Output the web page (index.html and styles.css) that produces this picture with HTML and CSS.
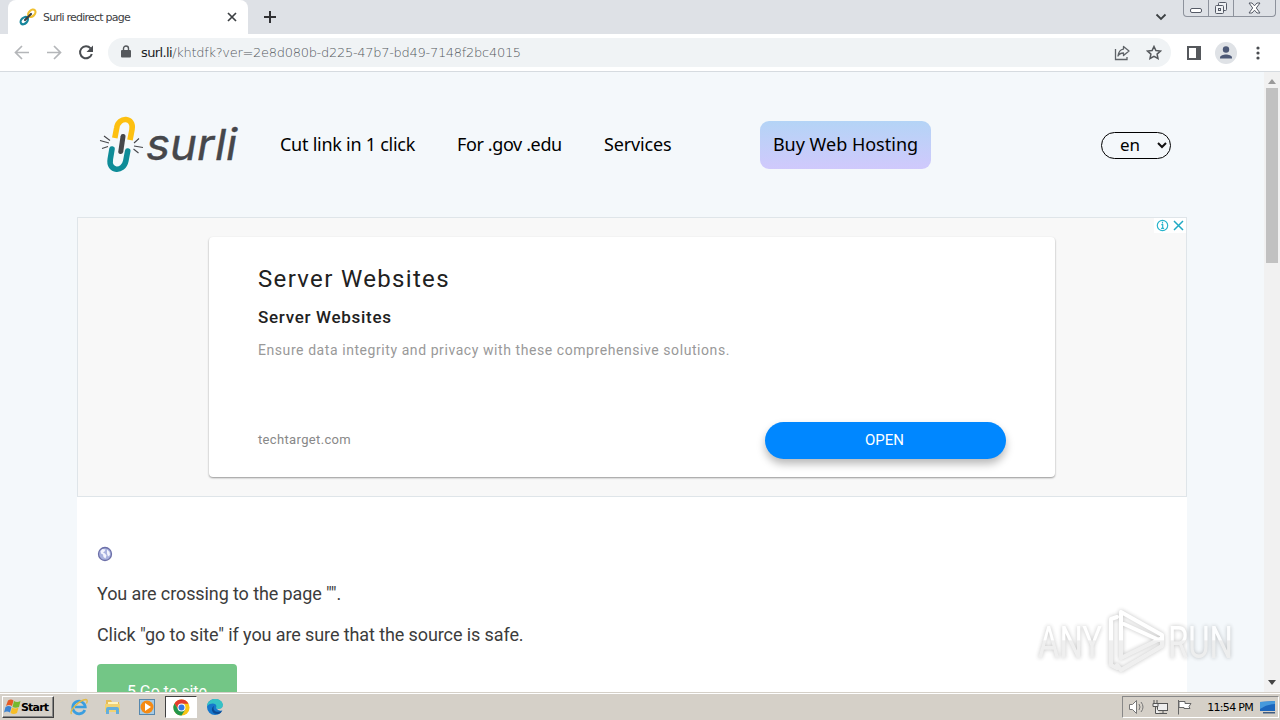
FILE: index.html
```html
<!DOCTYPE html>
<html lang="en">
<head>
  <meta charset="utf-8">
  <title>Surli redirect page</title>
  <link rel="stylesheet" href="styles.css">
</head>
<body>
  <div class="tabstrip">
    <div class="tab">
      <svg class="favicon" width="18" height="18" viewBox="0 0 18 18" fill="none" stroke-width="2.2" stroke-linecap="round">
        <ellipse cx="12.8" cy="5.3" rx="4.3" ry="2.9" transform="rotate(-45 12.8 5.3)" stroke="#f0c030"/>
        <ellipse cx="5.3" cy="12.6" rx="4.3" ry="2.9" transform="rotate(-45 5.3 12.6)" stroke="#16869c"/>
        <path d="M6 12l6-6" stroke="#3c4043"/>
      </svg>
      <span class="tab-title">Surli redirect page</span>
      <svg class="tab-close" width="10" height="10" viewBox="0 0 10 10" stroke="#3c4043" stroke-width="1.7"><path d="M1 1l8 8M9 1L1 9"/></svg>
    </div>
    <svg class="new-tab" width="12" height="12" viewBox="0 0 12 12" stroke="#303134" stroke-width="2"><path d="M6 0v12M0 6h12"/></svg>
    <svg class="tab-search" width="12" height="8" viewBox="0 0 12 8" fill="none" stroke="#3c4043" stroke-width="1.8"><path d="M1.5 1.5L6 6l4.5-4.5"/></svg>
    <div class="window-buttons">
      <div class="wbtn"><svg class="minimize" width="13" height="7" viewBox="0 0 13 7"><rect x=".5" y="1.5" width="11" height="4" rx="1.5" fill="#fff" stroke="#555a66"/></svg></div>
      <div class="wbtn"><svg width="14" height="14" viewBox="0 0 14 14" fill="#eef0f3" stroke="#555a66"><rect x="4.5" y="1.5" width="8" height="8" rx="1"/><rect x="1.5" y="4.5" width="8" height="8" rx="1"/><rect x="4.5" y="7.5" width="2" height="2"/></svg></div>
      <div class="wbtn wide"><svg width="13" height="12" viewBox="0 0 13 12"><path d="M1 1h3l2.500 2.800L9 1h3L8.300 6 12 11H9L6.500 8.200 4 11H1l3.700-5z" fill="#fff" stroke="#555a66"/></svg></div>
    </div>
  </div>

  <div class="toolbar">
    <svg class="nav-icon" width="16" height="16" viewBox="0 0 16 16" fill="none" stroke="#b4b6b9" stroke-width="1.7"><path d="M15 7.500H2M8 1L1.500 7.500 8 14"/></svg>
    <svg class="nav-icon" width="16" height="16" viewBox="0 0 16 16" fill="none" stroke="#b4b6b9" stroke-width="1.7"><path d="M1 7.500h13M8 1l6.500 6.500L8 14"/></svg>
    <svg class="nav-icon" width="16" height="16" viewBox="0 0 16 16"><path d="M12.600 3.300A6 6 0 1 0 13.800 9" fill="none" stroke="#4a4d51" stroke-width="2"/><path d="M15 .5V7H8.500z" fill="#4a4d51"/></svg>
    <div class="omnibox">
      <svg class="lock" width="10" height="13" viewBox="0 0 10 13"><path d="M2.500 6V3.500a2.500 2.500 0 0 1 5 0V6" fill="none" stroke="#55585c" stroke-width="1.4"/><rect y="5" width="10" height="7.500" rx="1" fill="#55585c"/></svg>
      <span class="url"><b>surl.li</b>/khtdfk?ver=2e8d080b-d225-47b7-bd49-7148f2bc4015</span>
      <svg class="share" width="16" height="16" viewBox="0 0 16 16" fill="none" stroke="#5f6368" stroke-width="1.3"><path d="M1.500 4v10.500H13V12"/><path d="M9.500 1.500L15 6l-5.500 4.500V8C6.500 8 5 9 4 11c.5-4 2.500-6.500 5.500-6.900z" stroke-linejoin="round"/></svg>
      <svg width="16" height="16" viewBox="0 0 16 16" fill="none" stroke="#55585c" stroke-width="1.5"><path d="M8 1.500l1.900 4.100 4.500.5-3.300 3 .9 4.400L8 11.300l-4 2.200.9-4.400-3.300-3 4.500-.5z"/></svg>
    </div>
    <svg class="side-panel" width="14" height="14" viewBox="0 0 14 14"><rect x="1" y="1" width="12" height="12" fill="#fff" stroke="#55585c" stroke-width="2"/><path d="M9 1h4v12H9z" fill="#55585c"/></svg>
    <svg class="avatar" width="22" height="22" viewBox="0 0 22 22"><circle cx="11" cy="11" r="11" fill="#dfe2e6"/><circle cx="11" cy="7.500" r="3.200" fill="#4c5876"/><path d="M5 16.500v-1c0-2 3.500-3 6-3s6 1 6 3v1z" fill="#4c5876"/></svg>
    <svg class="menu-dots" width="4" height="14" viewBox="0 0 4 14" fill="#4a4d51"><circle cx="2" cy="2" r="1.600"/><circle cx="2" cy="7" r="1.600"/><circle cx="2" cy="12" r="1.600"/></svg>
  </div>

  <div class="viewport">
    <div class="page">
      <header class="site-header">
        <svg class="logo" width="142" height="64" viewBox="98 113 142 64" fill="none">
          <path d="M114.800 138l1.900-10C118.500 116 134.500 117 132 129.500l-2 10.500" stroke="#fdc010" stroke-width="5.600"/>
          <path d="M112 149l-1.700 10C108 172 123.500 172.500 125.800 161l1.900-10" stroke="#0e8c98" stroke-width="5.600" stroke-linecap="round"/>
          <path d="M123 136.500l-2.200 15" stroke="#46474b" stroke-width="5" stroke-linecap="round"/>
          <path d="M104 136l6 4.500M100 140.500l9 2.500M102 148.500l6-2M139 138.500l-5 4.500M134 146l9 1.500M133.500 149l5 4" stroke="#46474b" stroke-width="1.100"/>
          <text x="146" y="160" textLength="91" lengthAdjust="spacingAndGlyphs" class="logo-text">surli</text>
        </svg>
        <nav class="site-nav">
          <a class="nav-cut">Cut link in 1 click</a>
          <a class="nav-gov">For .gov .edu</a>
          <a class="nav-services">Services</a>
        </nav>
        <a class="hosting-btn"><span>Buy Web Hosting</span></a>
        <div class="lang">
          <span>en</span>
          <svg width="10" height="7" viewBox="0 0 10 7" fill="none" stroke="#111" stroke-width="2"><path d="M1 1l4 4 4-4"/></svg>
        </div>
      </header>

      <main class="content">
        <section class="ad">
          <div class="ad-card">
            <h2 class="ad-title">Server Websites</h2>
            <h3 class="ad-subtitle">Server Websites</h3>
            <p class="ad-text">Ensure data integrity and privacy with these comprehensive solutions.</p>
            <div class="ad-footer">
              <span class="ad-domain">techtarget.com</span>
              <a class="ad-open">OPEN</a>
            </div>
          </div>
          <div class="ad-choices">
            <svg width="13" height="13" viewBox="0 0 13 13"><circle cx="6.500" cy="6.500" r="5.200" fill="none" stroke="#28b4cc" stroke-width="1.200"/><path d="M6.500 2.800v1.600M5.300 5.700h1.400v3.600M5.100 9.400h3" stroke="#28b4cc" stroke-width="1.200" fill="none"/></svg>
            <svg width="11" height="11" viewBox="0 0 11 11" stroke="#20a9c4" stroke-width="1.500"><path d="M1 1l9 9M10 1l-9 9"/></svg>
          </div>
        </section>

        <section class="redirect">
          <svg class="globe" width="16" height="16" viewBox="0 0 16 16"><circle cx="8" cy="8" r="6.500" fill="#a9b2de" stroke="#6c6fa8" stroke-width="1.300"/><path d="M3.500 5l2-2 3 .5-1 2-1.500 1 2 1 1.500 2-1 3-2-1.500-.5-2.500-2-1zM10 3.500l2.500 2.500.5 3-2 1.500-1-3z" fill="#f3f4fd"/></svg>
          <p class="line-page">You are crossing to the page "".</p>
          <p class="line-click">Click "go to site" if you are sure that the source is safe.</p>
          <a class="go-btn">5 Go to site</a>
        </section>
      </main>
    </div>

    <div class="scrollbar">
      <svg width="8" height="5" viewBox="0 0 8 5"><path d="M0 5l4-5 4 5z" fill="#9a9a9a"/></svg>
      <div class="thumb"></div>
      <svg class="scroll-down" width="8" height="5" viewBox="0 0 8 5"><path d="M0 0h8L4 5z" fill="#444"/></svg>
    </div>

    <div class="watermark">
      <svg width="206" height="70" viewBox="0 0 206 70">
        <defs>
          <linearGradient id="fade" gradientUnits="userSpaceOnUse" x1="0" y1="0" x2="0" y2="70">
            <stop offset=".48" stop-color="#fff"/>
            <stop offset=".5" stop-color="#ececec"/>
          </linearGradient>
        </defs>
        <text x="4" y="52" textLength="64" lengthAdjust="spacingAndGlyphs">ANY</text>
        <g fill="none" stroke="url(#fade)" stroke-linejoin="round" stroke-linecap="round" stroke-width="4">
          <path d="M83 11l-6 2v46l6 3"/>
          <path d="M87 6v46l41-20v-3z"/>
          <path d="M90 18l35 16"/>
          <path d="M83 59l4 5 41-24v-7"/>
        </g>
        <text x="134" y="52" textLength="65" lengthAdjust="spacingAndGlyphs">RUN</text>
      </svg>
    </div>
  </div>

  <div class="taskbar">
    <div class="start">
      <svg width="17" height="16" viewBox="0 0 17 16"><path d="M4 1.500q3-2 5.500 0L8 7Q5 5 2 7z" fill="#e65a24"/><path d="M10 2q3 2 6.500 0L15 8q-3.500 1.500-6.500 0z" fill="#76b82f"/><path d="M1.500 8q3-2 6 0L6 13.500q-3-2-6 0z" fill="#3c83d2"/><path d="M8 8.500q3 2 6.500 0L13 14q-3.500 2-6.500 0z" fill="#f6bd26"/></svg>
      <span>Start</span>
    </div>
    <div class="task"><svg width="18" height="18" viewBox="0 0 18 18" fill="none"><path d="M14.800 12A6.300 6.300 0 1 1 15.300 9H5" stroke="#3a9ee0" stroke-width="2.700"/><path d="M1.500 16C-1 13 9 2 16 1.500c1.500 0 1.500 2 .5 4" stroke="#e2ba45" stroke-width="1.300"/></svg></div>
    <div class="task"><svg width="18" height="18" viewBox="0 0 18 18"><path d="M2 2h5l1 2h7v9H2z" fill="#e6bd58"/><path d="M4 4h10v7H4z" fill="#fff4bd"/><path d="M1 6h15v8H1z" fill="#f1d272"/><path d="M2 16v-5q0-2 2-2h9q2 0 2 2v5h-3v-4H5v4z" fill="#64aedb"/></svg></div>
    <div class="task"><svg width="18" height="18" viewBox="0 0 18 18"><rect x="1.500" y="1.500" width="15" height="15" fill="#a6cbe5" stroke="#5687ad"/><circle cx="9" cy="9" r="6.500" fill="#f58a13"/><path d="M7 5l6 4-6 4z" fill="#fff"/></svg></div>
    <div class="task active"><svg width="17" height="17" viewBox="0 0 18 18"><circle cx="9" cy="9" r="8.500" fill="#f9c515"/><path d="M1.600 4.700A8.500 8.500 0 0 1 16.400 5H9L6 12z" fill="#e33b2e"/><path d="M1.600 4.700A8.500 8.500 0 0 0 9 17.500l4-6.500H5.500z" fill="#22964c"/><circle cx="9" cy="9" r="4.200" fill="#fff"/><circle cx="9" cy="9" r="3.200" fill="#3478e5"/></svg></div>
    <div class="task"><svg width="18" height="18" viewBox="0 0 18 18"><circle cx="9" cy="9" r="8" fill="#1677cc"/><path d="M1 8C2-1 16-1 17 7c0 4-5 5-7 3 2-5-5-6-9-2z" fill="#35c2c5"/><path d="M8 8c-2 5 3 7 8 5l-1 1.500c-3 3-8 1.500-9-2-.5-2 .5-4 2-4.500z" fill="#0c4a94"/><path d="M10 10c2 2 7 1 7-3v5q-4 2-7-2z" fill="#d5d0c8"/></svg></div>
    <div class="tray">
      <svg width="18" height="16" viewBox="0 0 18 16" fill="none" stroke="#777"><path d="M1.500 5.500h3l4-4v13l-4-4h-3z" fill="#fff"/><path d="M11 5q2 3 0 6M13 3q4 5 0 10"/></svg>
      <svg width="18" height="16" viewBox="0 0 18 16" fill="#eee" stroke="#555"><rect x="5.500" y="4.500" width="10" height="7"/><path d="M8 14.500h7M11 12v2M2 1v3M5 1v3M1 4.500h5v3H1zM3.500 8v6.500H8"/></svg>
      <svg width="18" height="16" viewBox="0 0 18 16" fill="#fff" stroke="#666"><path d="M2.500 1v14.500M3 2.500h6v2h6l-2 3 1 2H8v-1H3z"/></svg>
      <span class="clock">11:54 PM</span>
      <svg width="17" height="15" viewBox="0 0 17 15"><path d="M1 2l15-1v10H1z" fill="#1c66bd"/><path d="M1 2l15-1v3Q8 4 1 9z" fill="#4699dc"/><path d="M4 12h12v1.500H4z" fill="#405c80"/></svg>
    </div>
  </div>
</body>
</html>
```

FILE: styles.css
```css
* {
  box-sizing: border-box;
}

body {
  margin: 0;
  width: 1280px;
  height: 720px;
  overflow: hidden;
  display: flex;
  flex-direction: column;
  font-family: "Noto Sans", sans-serif;
  background: #fff;
}

svg {
  flex-shrink: 0;
}

/* browser chrome */
.tabstrip {
  height: 34px;
  display: flex;
  align-items: center;
  background: #dee1e6;
  padding-left: 8px;
}

.tab {
  width: 240px;
  height: 34px;
  display: flex;
  align-items: center;
  padding: 0 11px;
  background: #fff;
  border-radius: 8px 8px 0 0;
}

.tab-title {
  margin-left: 6px;
  font: 11px "DejaVu Sans", sans-serif;
  letter-spacing: -0.77px;
  color: #3c4043;
}

.tab-close {
  margin-left: auto;
}

.new-tab {
  margin-left: 16px;
}

.tab-search {
  margin-left: auto;
}

.window-buttons {
  display: flex;
  align-self: flex-start;
  height: 17px;
  margin: 0 4px 0 16px;
  border: 1px solid #8d929c;
  border-top: 0;
  border-radius: 0 0 4px 4px;
}

.wbtn {
  width: 25px;
  display: flex;
  align-items: center;
  justify-content: center;
  border-right: 1px solid #8d929c;
}

.minimize {
  margin-top: 4px;
}

.wbtn.wide {
  width: 41px;
  border-right: 0;
}

.toolbar {
  height: 38px;
  display: flex;
  align-items: center;
  padding: 0 20px 0 14px;
  background: #fff;
  border-bottom: 1px solid #d6dbe0;
}

.nav-icon {
  margin-right: 16px;
}

.omnibox {
  width: 1063px;
  height: 29px;
  margin-left: -2px;
  padding: 0 9px 0 13px;
  display: flex;
  align-items: center;
  border-radius: 15px;
  background: #f0f3f5;
}

.lock {
  margin-bottom: 2px;
}

.url {
  margin-left: 10px;
  font: 200 13px "DejaVu Sans", sans-serif;
  letter-spacing: -0.29px;
  color: #55595e;
}

.url b {
  font-weight: 400;
  letter-spacing: -0.6px;
  color: #202124;
}

.share {
  margin: 0 16px 0 auto;
}

.side-panel {
  margin-left: 16px;
}

.avatar {
  margin-left: 14px;
}

.menu-dots {
  margin-left: auto;
}

/* site */
.viewport {
  position: relative;
  height: 620px;
  display: flex;
  overflow: hidden;
}

.page {
  width: 1264px;
  background: #f4f8fb;
}

.site-header {
  height: 145px;
  display: flex;
  align-items: center;
  padding: 0 93px 0 98px;
  font: 18px/24px "Noto Sans", sans-serif;
  color: #000;
}

.logo-text {
  font: italic 400 43px Inter, sans-serif;
  fill: #46474b;
  stroke: #46474b;
  stroke-width: 0.4px;
}

.site-nav {
  display: flex;
  gap: 42px;
  margin-left: 40px;
  padding-bottom: 1px;
  white-space: nowrap;
}

.nav-cut {
  width: 135px;
  letter-spacing: -0.26px;
}

.nav-gov {
  width: 105px;
  letter-spacing: -0.38px;
}

.nav-services {
  width: 68px;
  letter-spacing: -0.15px;
}

.hosting-btn {
  width: 171px;
  height: 48px;
  margin-left: 88px;
  padding-bottom: 1px;
  display: flex;
  align-items: center;
  justify-content: center;
  border-radius: 9px;
  background: linear-gradient(#b4d4f6, #d0c9fc);
  white-space: nowrap;
}

.lang {
  width: 70px;
  height: 27px;
  margin: 1px 0 0 auto;
  padding: 0 3px 0 18px;
  display: flex;
  align-items: center;
  justify-content: space-between;
  border: 1px solid #000;
  border-radius: 14px;
  font-size: 17px;
}

.content {
  width: 1110px;
  height: 475px;
  margin-left: 77px;
  background: #fff;
}

.ad {
  position: relative;
  height: 280px;
  padding: 19px 0 0 131px;
  border: 1px solid #dfe5e9;
  background: #f8f8f8;
}

.ad-card {
  width: 846px;
  height: 240px;
  padding: 26px 49px 0;
  border-radius: 4px;
  background: #fff;
  box-shadow: 0 1px 2px rgba(0, 0, 0, 0.4);
}

.ad-title,
.ad-subtitle,
.ad-text {
  margin: 0;
  white-space: nowrap;
}

.ad-title {
  font: 400 24px/32px Roboto, sans-serif;
  letter-spacing: 1.33px;
  color: #212121;
}

.ad-subtitle {
  margin-top: 9px;
  font: 500 17px/26px Roboto, sans-serif;
  letter-spacing: 0.7px;
  color: #212121;
}

.ad-text {
  margin-top: 10px;
  font: 14px/20px Roboto, sans-serif;
  letter-spacing: 0.57px;
  color: #999;
}

.ad-footer {
  display: flex;
  justify-content: space-between;
  align-items: center;
  margin-top: 62px;
}

.ad-domain {
  padding-bottom: 2px;
  font: 13px Roboto, sans-serif;
  letter-spacing: 0.35px;
  color: #888;
}

.ad-open {
  width: 241px;
  height: 37px;
  padding: 0 2px 2px 0;
  display: flex;
  align-items: center;
  justify-content: center;
  border-radius: 19px;
  background: #0087ff;
  color: #fff;
  font: 15px Roboto, sans-serif;
  box-shadow: 0 5px 9px rgba(0, 0, 0, 0.28);
}

.ad-choices {
  position: absolute;
  top: 0;
  right: 0;
  height: 15px;
  display: flex;
  align-items: center;
  gap: 4px;
  padding: 0 2px;
  background: #fff;
}

.redirect {
  padding: 49px 20px 0;
  font: 18px/24px Roboto, sans-serif;
  letter-spacing: -0.1px;
  color: #3c3c3c;
}

.redirect p {
  margin: 0;
}

.globe {
  display: block;
}

.redirect .line-page {
  margin-top: 20px;
}

.redirect .line-click {
  margin-top: 17px;
}

.go-btn {
  display: block;
  width: 140px;
  height: 54px;
  margin-top: 17px;
  padding-top: 18px;
  border-radius: 4px;
  background: #73c686;
  color: #fff;
  font: 16px/20px Roboto, sans-serif;
  text-align: center;
}

.scrollbar {
  width: 16px;
  display: flex;
  flex-direction: column;
  align-items: center;
  padding: 7px 0;
  background: #f1f1f1;
}

.thumb {
  width: 12px;
  height: 175px;
  margin-top: 4px;
  background: #c1c1c1;
}

.scroll-down {
  margin-top: auto;
}

.watermark {
  position: absolute;
  left: 1034px;
  top: 534px;
  filter: drop-shadow(0 0 2px rgba(0, 0, 0, 0.3));
  opacity: 0.8;
}

.watermark text {
  font: 45px Roboto, sans-serif;
  fill: url(#fade);
}

/* taskbar */
.taskbar {
  height: 28px;
  display: flex;
  align-items: center;
  padding-top: 1px;
  background: #d5d0c8;
  border-top: 1px solid #d5d0c8;
  box-shadow: inset 0 1px #fff;
  font: 11px "DejaVu Sans", sans-serif;
}

.start {
  width: 52px;
  height: 22px;
  margin: 0 8px 0 2px;
  padding-left: 1px;
  display: flex;
  align-items: center;
  border: 1px solid;
  border-color: #fff #404040 #404040 #fff;
  box-shadow: inset -1px -1px #888;
  font: bold 11px "DejaVu Sans", sans-serif;
  letter-spacing: -0.8px;
}

.task {
  width: 34px;
  height: 22px;
  display: flex;
  align-items: center;
  justify-content: center;
}

.task.active {
  width: 32px;
  margin: 0 1px;
  background: #fff;
  border: 1px solid;
  border-color: #404040 #fff #fff #404040;
}

.tray {
  width: 157px;
  height: 22px;
  margin-left: auto;
  margin-right: 1px;
  padding: 0 2px 0 5px;
  display: flex;
  align-items: center;
  gap: 6px;
  border: 1px solid;
  border-color: #888 #fff #fff #888;
}

.clock {
  margin-left: auto;
  white-space: nowrap;
  letter-spacing: -0.7px;
}
```
